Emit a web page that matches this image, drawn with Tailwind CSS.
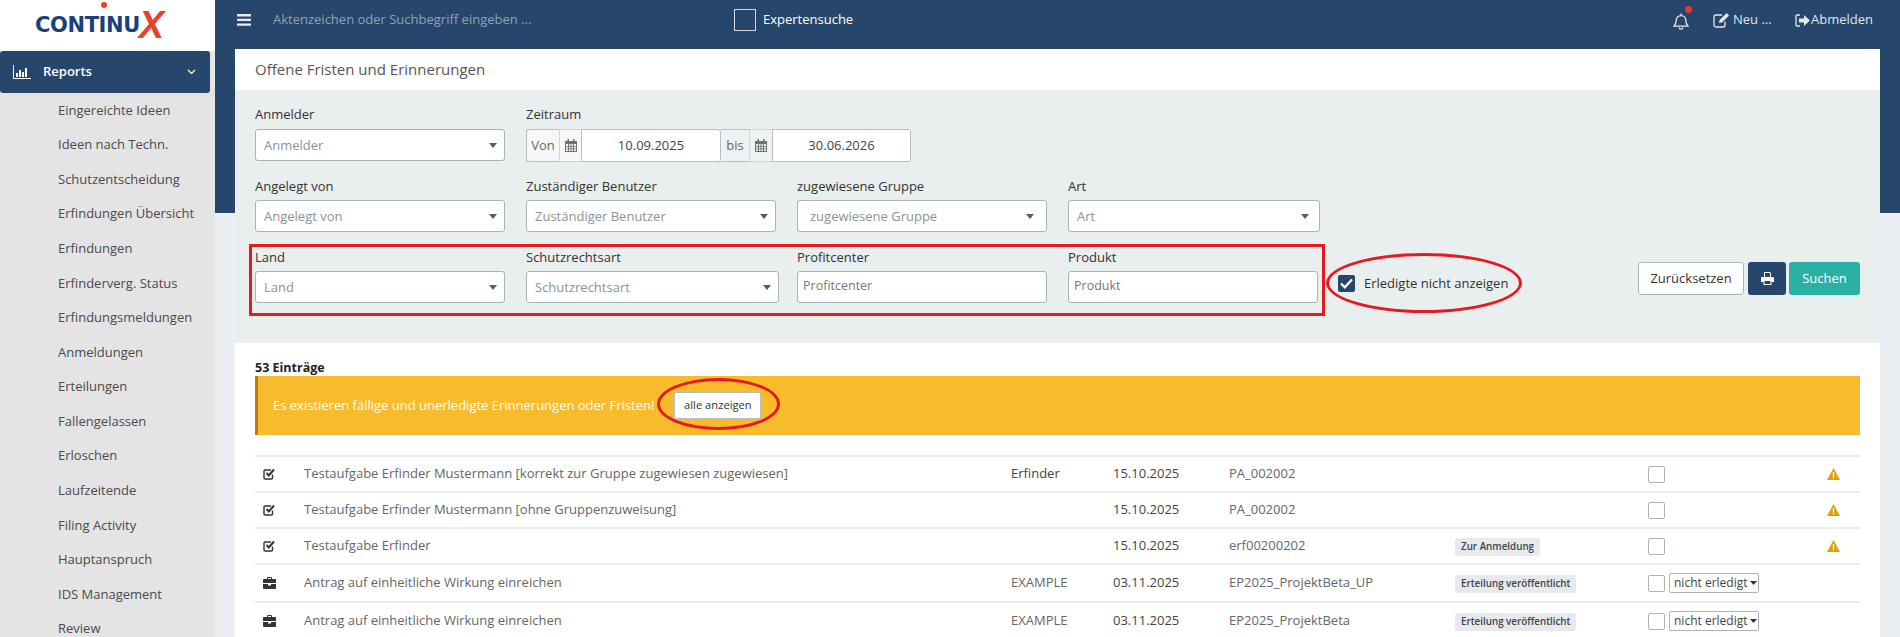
<!DOCTYPE html>
<html lang="de">
<head>
<meta charset="utf-8">
<title>Offene Fristen und Erinnerungen</title>
<script src="https://cdn.jsdelivr.net/npm/@tailwindcss/browser@4"></script>
</head>
<body class="m-0 bg-[#ebeff4]">
<div class="relative flex h-[637px] w-[1900px] overflow-hidden font-['Open_Sans',sans-serif] text-[13px] text-[#444]">

  <!-- Sidebar -->
  <aside class="flex h-full w-[215px] shrink-0 flex-col bg-[#e4e4e4]">
    <div class="flex h-[51px] shrink-0 items-center bg-white pb-[6px] pl-[35px]">
      <span class="relative flex items-baseline font-['DejaVu_Sans',sans-serif] text-[21px] font-bold leading-none tracking-[-0.4px] text-[#17417a]">CONTINU<span class="relative top-[6px] ml-[-1px] font-['Liberation_Sans',sans-serif] text-[38px] italic leading-[20px] text-[#e8402b]">X</span><span class="absolute left-[66px] top-[-7px] h-[6px] w-[6px] rounded-full bg-[#e8402b]"></span></span>
    </div>
    <div class="flex h-[42px] w-[210px] shrink-0 items-center rounded-[3px] bg-[#26476b] pl-[13px] pr-[14px] font-semibold text-white">
      <svg class="h-[14px] w-[18px]" viewBox="0 0 18 14" fill="#fff"><path d="M0 0h1v13h17v1H0z"/><rect x="3" y="8" width="2" height="4"/><rect x="6" y="5" width="2" height="7"/><rect x="9" y="7" width="2" height="5"/><rect x="12" y="3" width="2" height="9"/></svg>
      <span class="ml-[12px]">Reports</span>
      <svg class="ml-auto h-[6px] w-[9px]" viewBox="0 0 9 6" fill="none" stroke="#fff" stroke-width="1.2"><path d="M1 1l3.5 3.5L8 1"/></svg>
    </div>
    <nav class="flex flex-col pl-[58px] text-[#4a4a4a]">
      <a class="flex h-[34.6px] items-center">Eingereichte Ideen</a>
      <a class="flex h-[34.6px] items-center">Ideen nach Techn.</a>
      <a class="flex h-[34.6px] items-center">Schutzentscheidung</a>
      <a class="flex h-[34.6px] items-center">Erfindungen Übersicht</a>
      <a class="flex h-[34.6px] items-center">Erfindungen</a>
      <a class="flex h-[34.6px] items-center">Erfinderverg. Status</a>
      <a class="flex h-[34.6px] items-center">Erfindungsmeldungen</a>
      <a class="flex h-[34.6px] items-center">Anmeldungen</a>
      <a class="flex h-[34.6px] items-center">Erteilungen</a>
      <a class="flex h-[34.6px] items-center">Fallengelassen</a>
      <a class="flex h-[34.6px] items-center">Erloschen</a>
      <a class="flex h-[34.6px] items-center">Laufzeitende</a>
      <a class="flex h-[34.6px] items-center">Filing Activity</a>
      <a class="flex h-[34.6px] items-center">Hauptanspruch</a>
      <a class="flex h-[34.6px] items-center">IDS Management</a>
      <a class="flex h-[34.6px] items-center">Review</a>
    </nav>
  </aside>

  <!-- Main -->
  <main class="flex min-w-0 flex-1 flex-col bg-[linear-gradient(#26476b_213px,#ebeff4_213px)]">
    <!-- Header -->
    <header class="flex h-[49px] shrink-0 items-center pb-[9px] pl-[22px] text-white">
      <svg class="h-[12px] w-[14px]" viewBox="0 0 14 12" fill="#e8ecef"><rect width="14" height="2.4" rx=".5"/><rect y="4.7" width="14" height="2.4" rx=".5"/><rect y="9.4" width="14" height="2.4" rx=".5"/></svg>
      <span class="ml-[22px] w-[461px] text-[#8fa1b3]">Aktenzeichen oder Suchbegriff eingeben ...</span>
      <span class="h-[22px] w-[22px] border border-[#d5dbe0]"></span>
      <span class="ml-[7px]">Expertensuche</span>
      <div class="ml-auto flex items-center text-[#dfe5ea]">
        <span class="relative mt-[3px] block h-[17px] w-[16px]">
          <svg class="h-[17px] w-[16px]" viewBox="0 0 16 17" fill="none" stroke="#e4e8ec" stroke-width="1.3"><path d="M1 13.2c1.500-1.400 2.200-3 2.200-6 0-2.600 2-4.600 4.800-4.600s4.800 2 4.800 4.600c0 3 .7 4.600 2.200 6z"/><path d="M8 .6v2M6.200 14.400c0 1 .8 1.700 1.800 1.700s1.800-.7 1.800-1.700"/></svg>
          <span class="absolute right-[-3px] top-[-7px] h-[7px] w-[7px] rounded-full bg-[#f0352c]"></span>
        </span>
        <svg class="ml-[24px] h-[16px] w-[17px]" viewBox="0 0 17 16" fill="none" stroke="#e4e8ec" stroke-width="1.3"><path d="M12 9.500v3.500a2 2 0 0 1-2 2H3a2 2 0 0 1-2-2V5a2 2 0 0 1 2-2h6"/><path d="M6 11l.6-3 7-7 2.400 2.400-7 7z" fill="#e4e8ec" stroke="none"/></svg>
        <span class="ml-[3px] w-[62px]">Neu ...</span>
        <svg class="h-[15px] w-[15px]" viewBox="0 0 15 15"><path d="M5 2H2a1 1 0 0 0-1 1v9a1 1 0 0 0 1 1h3" fill="none" stroke="#e4e8ec" stroke-width="1.3"/><path d="M4 5.500h5V2l6 5.500-6 5.500V9.500H4z" fill="#e4e8ec"/></svg>
        <span class="ml-[1px] mr-[27px]">Abmelden</span>
      </div>
    </header>

    <!-- Filter panel -->
    <section class="mx-[20px] shrink-0">
      <h1 class="flex h-[41px] items-center bg-white pl-[20px] text-[15px] font-normal text-[#555]">Offene Fristen und Erinnerungen</h1>
      <div class="h-[253px] bg-[#e9eeee] px-[20px] pt-[14px] text-[#333]">
        <!-- row 1 -->
        <div class="flex h-[58px] gap-[21px]">
          <div class="w-[250px]">
            <label class="mb-[5px] block h-[20px] leading-[20px]">Anmelder</label>
            <div class="flex h-[32px] items-center justify-between rounded-[3px] border border-[#a9b4b8] bg-white pl-[8px] pr-[7px] pt-[1px] text-[#8a9396]">Anmelder<svg class="h-[5px] w-[8px]" viewBox="0 0 8 5" fill="#4d5f70"><path d="M0 0h8L4 5z"/></svg></div>
          </div>
          <div>
            <label class="mb-[5px] block h-[20px] leading-[20px]">Zeitraum</label>
            <div class="flex h-[33px] items-stretch pt-0">
              <span class="flex w-[33px] items-center justify-center rounded-l-[3px] border-y border-l border-[#b5bec1] bg-[#f6f8f8] text-[#666]">Von</span>
              <span class="flex w-[22px] items-center justify-center border-y border-l border-[#cfd6d8] bg-[#f6f8f8]"><svg class="h-[13px] w-[12px]" viewBox="0 0 12 13"><path fill="#6c7377" d="M0 2h12v11H0zM1 5v7h10V5zM2.500 0h1.500v3H2.500zM8 0h1.500v3H8zM3 5h1v7H3zM5.500 5h1v7h-1zM8 5h1v7H8zM1 7.200h10v.8H1zM1 9.500h10v.8H1z"/></svg></span>
              <span class="flex w-[140px] items-center justify-center rounded-r-[3px] border border-[#b5bec1] bg-white text-[#444]">10.09.2025</span>
              <span class="flex w-[28px] items-center justify-center border-y border-[#b5bec1] bg-[#eef2f2] text-[#666]">bis</span>
              <span class="flex w-[23px] items-center justify-center border-y border-l border-[#cfd6d8] bg-[#eef2f2]"><svg class="h-[13px] w-[12px]" viewBox="0 0 12 13"><path fill="#6c7377" d="M0 2h12v11H0zM1 5v7h10V5zM2.500 0h1.500v3H2.500zM8 0h1.500v3H8zM3 5h1v7H3zM5.500 5h1v7h-1zM8 5h1v7H8zM1 7.200h10v.8H1zM1 9.500h10v.8H1z"/></svg></span>
              <span class="flex w-[139px] items-center justify-center rounded-r-[3px] border border-[#b5bec1] bg-white text-[#444]">30.06.2026</span>
            </div>
          </div>
        </div>
        <!-- row 2 -->
        <div class="mt-[14px] flex gap-[21px]">
          <div class="w-[250px]">
            <label class="mb-[4px] block h-[20px] leading-[20px]">Angelegt von</label>
            <div class="flex h-[32px] items-center justify-between rounded-[3px] border border-[#a9b4b8] bg-white pl-[8px] pr-[7px] pt-[1px] text-[#8a9396]">Angelegt von<svg class="h-[5px] w-[8px]" viewBox="0 0 8 5" fill="#4d5f70"><path d="M0 0h8L4 5z"/></svg></div>
          </div>
          <div class="w-[250px]">
            <label class="mb-[4px] block h-[20px] leading-[20px]">Zuständiger Benutzer</label>
            <div class="flex h-[32px] items-center justify-between rounded-[3px] border border-[#a9b4b8] bg-white pl-[8px] pr-[7px] pt-[1px] text-[#8a9396]">Zuständiger Benutzer<svg class="h-[5px] w-[8px]" viewBox="0 0 8 5" fill="#4d5f70"><path d="M0 0h8L4 5z"/></svg></div>
          </div>
          <div class="w-[250px]">
            <label class="mb-[4px] block h-[20px] leading-[20px]">zugewiesene Gruppe</label>
            <div class="flex h-[32px] items-center justify-between rounded-[3px] border border-[#a9b4b8] bg-white pl-[12px] pr-[12px] pt-[1px] text-[#8a9396]">zugewiesene Gruppe<svg class="h-[5px] w-[8px]" viewBox="0 0 8 5" fill="#4d5f70"><path d="M0 0h8L4 5z"/></svg></div>
          </div>
          <div class="w-[252px]">
            <label class="mb-[4px] block h-[20px] leading-[20px]">Art</label>
            <div class="flex h-[32px] items-center justify-between rounded-[3px] border border-[#a9b4b8] bg-white pl-[8px] pr-[10px] pt-[1px] text-[#8a9396]">Art<svg class="h-[5px] w-[8px]" viewBox="0 0 8 5" fill="#4d5f70"><path d="M0 0h8L4 5z"/></svg></div>
          </div>
        </div>
        <!-- row 3 -->
        <div class="mt-[15px] flex items-start">
          <div class="w-[250px]">
            <label class="mb-[4px] block h-[20px] leading-[20px]">Land</label>
            <div class="flex h-[32px] items-center justify-between rounded-[3px] border border-[#a9b4b8] bg-white pl-[8px] pr-[7px] pt-[1px] text-[#8a9396]">Land<svg class="h-[5px] w-[8px]" viewBox="0 0 8 5" fill="#4d5f70"><path d="M0 0h8L4 5z"/></svg></div>
          </div>
          <div class="ml-[21px] w-[253px]">
            <label class="mb-[4px] block h-[20px] leading-[20px]">Schutzrechtsart</label>
            <div class="flex h-[32px] items-center justify-between rounded-[3px] border border-[#a9b4b8] bg-white pl-[8px] pr-[7px] pt-[1px] text-[#8a9396]">Schutzrechtsart<svg class="h-[5px] w-[8px]" viewBox="0 0 8 5" fill="#4d5f70"><path d="M0 0h8L4 5z"/></svg></div>
          </div>
          <div class="ml-[18px] w-[250px]">
            <label class="mb-[4px] block h-[20px] leading-[20px]">Profitcenter</label>
            <div class="flex h-[32px] items-start rounded-[3px] border border-[#a9b4b8] bg-white pl-[5px] pt-[5px] text-[12.500px] text-[#777]">Profitcenter</div>
          </div>
          <div class="ml-[21px] w-[250px]">
            <label class="mb-[4px] block h-[20px] leading-[20px]">Produkt</label>
            <div class="flex h-[32px] items-start rounded-[3px] border border-[#a9b4b8] bg-white pl-[5px] pt-[5px] text-[12.500px] text-[#777]">Produkt</div>
          </div>
          <div class="ml-[20px] mt-[27px] flex items-center">
            <span class="flex h-[17px] w-[17px] items-center justify-center rounded-[2px] bg-[#26476b]"><svg class="h-[11px] w-[13px]" viewBox="0 0 13 11" fill="none" stroke="#fff" stroke-width="2.2"><path d="M1 5.500l3.800 3.800L12 1.500"/></svg></span>
            <span class="ml-[9px]">Erledigte nicht anzeigen</span>
          </div>
          <div class="ml-auto mt-[15px] flex">
            <button class="h-[33px] w-[106px] rounded-[3px] border border-[#a9b4b8] bg-white text-[#333]">Zurücksetzen</button>
            <button class="ml-[4px] flex h-[33px] w-[38px] items-center justify-center rounded-[3px] bg-[#26476b]"><svg class="h-[13px] w-[13px]" viewBox="0 0 13 13" fill="#fff"><path d="M3 0h6l1 1v4H3zM4 1v4h5V1.500L8.500 1zM0 6a1 1 0 0 1 1-1h11a1 1 0 0 1 1 1v4h-2.500v3h-8v-3H0zM3.500 9v3h6V9z"/></svg></button>
            <button class="ml-[3px] h-[33px] w-[71px] rounded-[3px] bg-[#2ab1a3] text-white">Suchen</button>
          </div>
        </div>
      </div>
    </section>

    <!-- Result panel -->
    <section class="mx-[20px] flex-1 bg-white px-[20px] pt-[16px]">
      <div class="h-[17px] text-[12.500px] font-bold leading-[17px] text-[#222]">53 Einträge</div>
      <div class="flex h-[59px] items-center border-l-[3px] border-[#b97d0f] bg-[#f8bb2b] pl-[15px] text-white">
        <span>Es existieren fällige und unerledigte Erinnerungen oder Fristen!</span>
        <button class="ml-[20px] h-[27px] w-[87px] rounded-[2px] border border-[#b0bec5] bg-white text-[11.200px] text-[#333]">alle anzeigen</button>
      </div>
      <div class="mt-[20px] text-[#666]">
        <div class="grid h-[36px] grid-cols-[49px_707px_102px_116px_226px_193px_179px_33px] items-center border-t-2 border-[#ececec]">
          <span class="pl-[8px]"><svg class="h-[12px] w-[12px]" viewBox="0 0 12 12" fill="none" stroke="#333" stroke-width="1.4"><path d="M9.500 6.500V10a1 1 0 0 1-1 1H2a1 1 0 0 1-1-1V3a1 1 0 0 1 1-1h6"/><path d="M3.500 5l2.300 2.500L11 1.500" stroke-width="2"/></svg></span>
          <span>Testaufgabe Erfinder Mustermann [korrekt zur Gruppe zugewiesen zugewiesen]</span>
          <span class="text-[#444]">Erfinder</span>
          <span class="text-[#444]">15.10.2025</span>
          <span>PA_002002</span>
          <span></span>
          <span class="h-[17px] w-[17px] rounded-[2px] border border-[#a9b4b8]"></span>
          <svg class="h-[12px] w-[13px]" viewBox="0 0 13 12"><path fill="#e2a006" d="M6.500 0L13 12H0z"/><path fill="#fff" d="M5.800 4h1.400v4.500H5.800zM5.800 9.300h1.400v1.300H5.800z"/></svg>
        </div>
        <div class="grid h-[36px] grid-cols-[49px_707px_102px_116px_226px_193px_179px_33px] items-center border-t-2 border-[#ececec]">
          <span class="pl-[8px]"><svg class="h-[12px] w-[12px]" viewBox="0 0 12 12" fill="none" stroke="#333" stroke-width="1.4"><path d="M9.500 6.500V10a1 1 0 0 1-1 1H2a1 1 0 0 1-1-1V3a1 1 0 0 1 1-1h6"/><path d="M3.500 5l2.300 2.500L11 1.500" stroke-width="2"/></svg></span>
          <span>Testaufgabe Erfinder Mustermann [ohne Gruppenzuweisung]</span>
          <span></span>
          <span class="text-[#444]">15.10.2025</span>
          <span>PA_002002</span>
          <span></span>
          <span class="h-[17px] w-[17px] rounded-[2px] border border-[#a9b4b8]"></span>
          <svg class="h-[12px] w-[13px]" viewBox="0 0 13 12"><path fill="#e2a006" d="M6.500 0L13 12H0z"/><path fill="#fff" d="M5.800 4h1.400v4.500H5.800zM5.800 9.300h1.400v1.300H5.800z"/></svg>
        </div>
        <div class="grid h-[36px] grid-cols-[49px_707px_102px_116px_226px_193px_179px_33px] items-center border-t-2 border-[#ececec]">
          <span class="pl-[8px]"><svg class="h-[12px] w-[12px]" viewBox="0 0 12 12" fill="none" stroke="#333" stroke-width="1.4"><path d="M9.500 6.500V10a1 1 0 0 1-1 1H2a1 1 0 0 1-1-1V3a1 1 0 0 1 1-1h6"/><path d="M3.500 5l2.300 2.500L11 1.500" stroke-width="2"/></svg></span>
          <span>Testaufgabe Erfinder</span>
          <span></span>
          <span class="text-[#444]">15.10.2025</span>
          <span>erf00200202</span>
          <span><span class="inline-flex h-[18px] items-center rounded-[3px] bg-[#e6e9ee] px-[6px] text-[9.800px] font-semibold text-[#444]">Zur Anmeldung</span></span>
          <span class="h-[17px] w-[17px] rounded-[2px] border border-[#a9b4b8]"></span>
          <svg class="h-[12px] w-[13px]" viewBox="0 0 13 12"><path fill="#e2a006" d="M6.500 0L13 12H0z"/><path fill="#fff" d="M5.800 4h1.400v4.500H5.800zM5.800 9.300h1.400v1.300H5.800z"/></svg>
        </div>
        <div class="grid h-[38px] grid-cols-[49px_707px_102px_116px_226px_193px_179px_33px] items-center border-t-2 border-[#ececec]">
          <span class="pl-[8px]"><svg class="h-[12px] w-[13px]" viewBox="0 0 13 12" fill="#333"><path d="M4 2V1a1 1 0 0 1 1-1h3a1 1 0 0 1 1 1v1h3a1 1 0 0 1 1 1v3H0V3a1 1 0 0 1 1-1zM5 2h3V1H5zM0 7h5v1.500h3V7h5v4a1 1 0 0 1-1 1H1a1 1 0 0 1-1-1z"/></svg></span>
          <span>Antrag auf einheitliche Wirkung einreichen</span>
          <span>EXAMPLE</span>
          <span class="text-[#444]">03.11.2025</span>
          <span>EP2025_ProjektBeta_UP</span>
          <span><span class="inline-flex h-[18px] items-center rounded-[3px] bg-[#e6e9ee] px-[6px] text-[9.800px] font-semibold text-[#444]">Erteilung veröffentlicht</span></span>
          <span class="flex items-center"><span class="h-[17px] w-[17px] rounded-[2px] border border-[#a9b4b8]"></span><span class="ml-[4px] flex h-[20px] w-[90px] items-center rounded-[2px] border border-[#a9b4b8] pl-[4px] text-[12px] text-[#444]">nicht erledigt<svg class="ml-[3px] h-[4px] w-[7px]" viewBox="0 0 7 4" fill="#333"><path d="M0 0h7L3.500 4z"/></svg></span></span>
          <span></span>
        </div>
        <div class="grid h-[38px] grid-cols-[49px_707px_102px_116px_226px_193px_179px_33px] items-center border-t-2 border-[#ececec]">
          <span class="pl-[8px]"><svg class="h-[12px] w-[13px]" viewBox="0 0 13 12" fill="#333"><path d="M4 2V1a1 1 0 0 1 1-1h3a1 1 0 0 1 1 1v1h3a1 1 0 0 1 1 1v3H0V3a1 1 0 0 1 1-1zM5 2h3V1H5zM0 7h5v1.500h3V7h5v4a1 1 0 0 1-1 1H1a1 1 0 0 1-1-1z"/></svg></span>
          <span>Antrag auf einheitliche Wirkung einreichen</span>
          <span>EXAMPLE</span>
          <span class="text-[#444]">03.11.2025</span>
          <span>EP2025_ProjektBeta</span>
          <span><span class="inline-flex h-[18px] items-center rounded-[3px] bg-[#e6e9ee] px-[6px] text-[9.800px] font-semibold text-[#444]">Erteilung veröffentlicht</span></span>
          <span class="flex items-center"><span class="h-[17px] w-[17px] rounded-[2px] border border-[#a9b4b8]"></span><span class="ml-[4px] flex h-[20px] w-[90px] items-center rounded-[2px] border border-[#a9b4b8] pl-[4px] text-[12px] text-[#444]">nicht erledigt<svg class="ml-[3px] h-[4px] w-[7px]" viewBox="0 0 7 4" fill="#333"><path d="M0 0h7L3.500 4z"/></svg></span></span>
          <span></span>
        </div>
      </div>
    </section>
  </main>

  <!-- Red annotations laid over the page -->
  <div class="pointer-events-none absolute left-[249px] top-[244px] h-[72px] w-[1076px] border-[3px] border-[#e8181f]"></div>
  <div class="pointer-events-none absolute left-[1326px] top-[253px] h-[60px] w-[196px] rounded-[50%] border-[3px] border-[#e8181f]"></div>
  <div class="pointer-events-none absolute left-[657px] top-[378px] h-[52px] w-[123px] rounded-[50%] border-[3px] border-[#e8181f]"></div>
</div>
</body>
</html>
